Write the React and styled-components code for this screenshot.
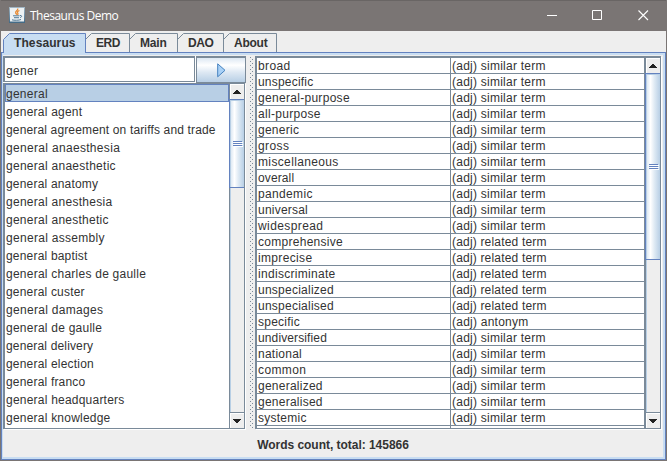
import React from 'react';
import styled, { createGlobalStyle } from 'styled-components';

const steel = '#7a8a99';
const blue = '#6382bf';
const pale = '#c8ddf2';

const GlobalStyle = createGlobalStyle`
  * { box-sizing: border-box; }
  body { margin: 0; overflow: hidden; font: 12px/16px "Liberation Sans", Arial, sans-serif; color: #333; }
  svg { display: block; }
`;

const Window = styled.div`
  width: 667px;
  height: 461px;
  display: flex;
  flex-direction: column;
  background: #eee;
  border: 1px solid #7a7574;
  border-top: 0;
  overflow: hidden;
`;

const TitleBar = styled.header`
  height: 31px;
  flex: none;
  display: flex;
  align-items: center;
  padding: 0 17px 2px 8px;
  background: #7a7574;
  border-top: 1px solid #696564;
  color: #fff;
`;

const Title = styled.h1`
  margin: 2px auto 0 5px;
  font: 12px/16px "Open Sans", "Noto Sans", sans-serif;
  letter-spacing: -0.5px;
`;

const WindowControls = styled.div`
  display: flex;
  gap: 35px;
  margin-top: 1px;
`;

const TabStrip = styled.nav`
  height: 21px;
  flex: none;
  display: flex;
  align-items: flex-end;
  padding-left: 2px;
`;

const TabShell = styled.div`
  width: ${p => p.$width}px;
  height: ${p => (p.$active ? 20 : 19)}px;
  margin-bottom: ${p => (p.$active ? -1 : 0)}px;
  display: grid;
  flex: none;
  z-index: 1;
  > * { grid-area: 1 / 1; }
`;

const TabLabel = styled.span`
  font-weight: bold;
  line-height: 21px;
  height: 19px;
  padding-left: ${p => p.$inset}px;
  letter-spacing: ${p => p.$spacing}px;
  white-space: nowrap;
`;

const TabPage = styled.main`
  flex: 1;
  min-height: 0;
  display: flex;
  flex-direction: column;
  border: 1px solid ${blue};
  box-shadow: inset -2px -2px ${pale}, inset 1px 0 ${pale};
  padding: 3px 3px 2px 1px;
  background: linear-gradient(${pale} 0 2px, #eee 2px);
`;

const SplitPane = styled.div`
  height: 374px;
  display: flex;
  flex: none;
`;

const SearchPane = styled.section`
  width: 243px;
  flex: none;
  display: flex;
  flex-direction: column;
`;

const SearchRow = styled.div`
  height: 27px;
  display: flex;
  flex: none;
  background: #fff;
`;

const SearchInput = styled.input`
  width: 192px;
  height: 26px;
  margin: 0 1px 0 0;
  padding: 2px 1px 0;
  border: solid ${steel};
  border-width: 2px 1px 1px 2px;
  border-radius: 0;
  outline: none;
  color: #333;
  font: 12px "Liberation Sans", Arial, sans-serif;
  letter-spacing: 0.3px;
`;

const GoButton = styled.button`
  width: 50px;
  height: 27px;
  padding: 0;
  display: grid;
  place-items: center;
  border: 1px solid ${steel};
  border-top-width: 2px;
  border-radius: 0;
  background: linear-gradient(#dde8f3 0, #fff 30%, #dde8f3 60%, #b8cfe5 100%);
`;

const ScrollFrame = styled.div`
  flex: 1;
  min-height: 0;
  display: flex;
  background: #fff;
  border: solid ${steel};
  border-width: ${p => p.$top}px 1px 1px 2px;
  box-shadow: 1px 1px #fff;
  margin: 0 1px 1px 0;
`;

const WordList = styled.ul`
  list-style: none;
  margin: 0;
  padding: 0;
  flex: 1;
  overflow: hidden;
`;

const WordRow = styled.li`
  height: 18px;
  line-height: 18px;
  white-space: nowrap;
  letter-spacing: ${p => p.$spacing}px;
  border: 1px solid ${p => (p.$selected ? blue : 'transparent')};
  background: ${p => (p.$selected ? '#b8cfe5' : 'none')};
`;

const Divider = styled.div`
  width: 9px;
  flex: none;
  display: flex;
  padding-left: 4px;
  margin-bottom: 2px;
  background: #eee;
`;

const TermTable = styled.div`
  flex: 1;
  overflow: hidden;
`;

const TermRow = styled.div`
  height: 16px;
  display: grid;
  grid-template-columns: 194px 1fr;
  border-bottom: 1px solid ${steel};
`;

const TermCell = styled.span`
  height: 15px;
  padding-left: 1px;
  line-height: 16px;
  letter-spacing: ${p => p.$spacing}px;
  white-space: nowrap;
  &:first-child { border-right: 1px solid ${steel}; }
`;

const Track = styled.div`
  width: ${p => p.$width}px;
  flex: none;
  display: flex;
  flex-direction: column;
  background: #eee;
  border-left: ${p => p.$edge}px solid ${steel};
  box-shadow: inset 1px 0 #b8cfe5;
`;

const ArrowButton = styled.div`
  height: 15px;
  flex: none;
  display: grid;
  place-items: center;
  padding-right: 2px;
  background: #eee;
  border: 1px solid #fff;
  border-width: 1px 0 0 1px;
  box-shadow: 0 ${p => (p.$up ? 1 : -1)}px ${steel};
`;

const Thumb = styled.div`
  height: ${p => p.$height}px;
  margin: 0 0 auto -1px;
  display: flex;
  flex-direction: column;
  align-items: center;
  justify-content: center;
  gap: 1px;
  border: 1px solid ${blue};
  border-right: 0;
  box-shadow: inset 1px 1px #b8cfe5;
  z-index: 1;
  background: linear-gradient(90deg, #d5e3f0 0, #fff 32%, #dfeaf4 60%, #b8cfe5 100%);
`;

const Grip = styled.i`
  width: 9px;
  height: 1px;
  background: ${blue};
  box-shadow: 1px 1px #fff;
`;

const Status = styled.footer`
  flex: 1;
  display: grid;
  place-items: center;
  font-weight: bold;
  letter-spacing: -0.03px;
  padding: 2px 0 0 1px;
`;

function Tab({ width, active, inset = 10, spacing = 0, children }) {
  const h = active ? 20 : 19;
  const left = active ? 0.5 : -0.5;
  return (
    <TabShell $width={width} $active={active}>
      <svg width={width} height={h}>
        <path d={`M${left} ${h}V6.5L${left + 6} .5H${width - 0.5}V${h}`} fill={active ? pale : '#eee'} stroke={active ? blue : steel} />
      </svg>
      <TabLabel $inset={inset} $spacing={spacing}>{children}</TabLabel>
    </TabShell>
  );
}

function Scrollbar({ width, height, edge }) {
  return (
    <Track $width={width} $edge={edge}>
      <ArrowButton $up><svg width="8" height="4" shapeRendering="crispEdges"><path d="M3 0h2v1h1v1h1v1h1v1H0V3h1V2h1V1h1z" fill="#222" /></svg></ArrowButton>
      <Thumb $height={height}><Grip /><Grip /><Grip /></Thumb>
      <ArrowButton><svg width="8" height="4" shapeRendering="crispEdges"><path d="M0 0h8v1H7v1H6v1H5v1H3V3H2V2H1V1H0z" fill="#222" /></svg></ArrowButton>
    </Track>
  );
}

function DividerDots() {
  return (
    <svg width="3" height="372" shapeRendering="crispEdges">
      <defs>
        <pattern id="bumps" width="4" height="4" patternUnits="userSpaceOnUse">
          <path d="M0 1h1v1H0zM2 3h1v1H2z" fill={steel} />
        </pattern>
      </defs>
      <path d="M0 0h3v372H0z" fill="url(#bumps)" />
    </svg>
  );
}

function JavaIcon() {
  return (
    <svg width="16" height="16" viewBox="0 0 16 16">
      <defs><linearGradient id="tile" x2="0" y2="1"><stop stopColor="#a4b8c6" /><stop offset="1" stopColor="#416985" /></linearGradient></defs>
      <path fill="url(#tile)" d="M0 0h16v16H0z" />
      <path fill="#edf1f3" d="M1 1h14v13.5H1z" />
      <path d="M8.7 1.5c.8 2-2.8 2.6-2 4.5.3.8 1.1 1 1 1.8M10.4 3.5c-2 1-2.4 1.7-1.6 2.6.5.6.2 1.1-.3 1.6" fill="none" stroke="#e88930" strokeWidth="1.3" />
      <path d="M4 8.8h6.5M5 10.7h5M3 12.8c2 .7 7 .7 9-.3M11 8.5c2.2-.4 2.2 1.6 0 2.1" fill="none" stroke="#537995" />
    </svg>
  );
}

const words = [
  ['general', 0.26], ['general agent', 0.22], ['general agreement on tariffs and trade', 0.15],
  ['general anaesthesia', 0.32], ['general anaesthetic', 0.27], ['general anatomy', 0.19],
  ['general anesthesia', 0.28], ['general anesthetic', 0.26], ['general assembly', 0.3],
  ['general baptist', 0.19], ['general charles de gaulle', 0.24], ['general custer', 0.19],
  ['general damages', 0.3], ['general de gaulle', 0.24], ['general delivery', 0.16],
  ['general election', 0.2], ['general franco', 0.19], ['general headquarters', 0.22],
  ['general knowledge', 0.22],
];

const terms = [
  ['broad', 0.4], ['unspecific', 0.2], ['general-purpose', 0.3], ['all-purpose', 0.3], ['generic', 0.26],
  ['gross', 0.4], ['miscellaneous', 0.36], ['overall', 0.12], ['pandemic', 0.35], ['universal', 0.22],
  ['widespread', 0.4], ['comprehensive', 0.28, 'related term'], ['imprecise', 0.34, 'related term'],
  ['indiscriminate', 0.3, 'related term'], ['unspecialized', 0.25, 'related term'],
  ['unspecialised', 0.25, 'related term'], ['specific', 0.25, 'antonym'], ['undiversified', 0.12],
  ['national', 0.25], ['common', 0.4], ['generalized', 0.25], ['generalised', 0.25], ['systemic', 0.25],
];

export default function App() {
  return (
    <>
      <GlobalStyle />
      <Window>
        <TitleBar>
          <JavaIcon />
          <Title>Thesaurus Demo</Title>
          <WindowControls>
            <svg width="11" height="11"><path d="M1 5.5h10" stroke="#fff" /></svg>
            <svg width="11" height="11"><path d="M.5.5h9v9h-9z" fill="none" stroke="#fff" /></svg>
            <svg width="11" height="11"><path d="M.5.5l9.5 9.5M10 .5L.5 10" stroke="#fff" strokeWidth="1.1" /></svg>
          </WindowControls>
        </TitleBar>
        <TabStrip>
          <Tab width={83} active inset={11} spacing={0.1}>Thesaurus</Tab>
          <Tab width={44} spacing={-0.4}>ERD</Tab>
          <Tab width={48} spacing={-0.2}>Main</Tab>
          <Tab width={46} spacing={-0.4}>DAO</Tab>
          <Tab width={53} spacing={-0.25}>About</Tab>
        </TabStrip>
        <TabPage>
          <SplitPane>
            <SearchPane>
              <SearchRow>
                <SearchInput defaultValue="gener" aria-label="Search" />
                <GoButton aria-label="Find">
                  <svg width="9" height="15"><path d="M.7.8v13L8 7.3z" fill="#a9d1f6" stroke="#4682bf" /></svg>
                </GoButton>
              </SearchRow>
              <ScrollFrame $top={1}>
                <WordList>
                  {words.map(([word, spacing], i) => <WordRow key={word} $selected={i === 0} $spacing={spacing}>{word}</WordRow>)}
                </WordList>
                <Scrollbar width={15} height={89} edge={1} />
              </ScrollFrame>
            </SearchPane>
            <Divider><DividerDots /></Divider>
            <ScrollFrame $top={2}>
              <TermTable>
                {terms.map(([term, spacing, relation = 'similar term']) => (
                  <TermRow key={term}>
                    <TermCell $spacing={spacing}>{term}</TermCell>
                    <TermCell $spacing={relation === 'related term' ? 0.18 : 0.24}>(adj) {relation}</TermCell>
                  </TermRow>
                ))}
                <TermRow><TermCell /><TermCell /></TermRow>
              </TermTable>
              <Scrollbar width={16} height={187} edge={2} />
            </ScrollFrame>
          </SplitPane>
          <Status>Words count, total: 145866</Status>
        </TabPage>
      </Window>
    </>
  );
}
